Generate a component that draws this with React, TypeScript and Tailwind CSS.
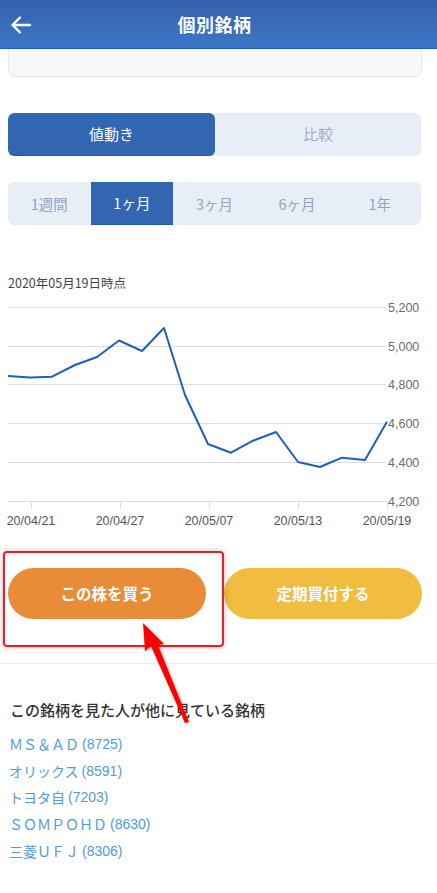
import React from "react";

const pts: [number, number][] = [
  [8, 376], [30, 377.5], [52, 376.7], [75, 365], [97, 357], [119, 340.5], [142, 351], [164, 328],
  [185, 395], [208, 444], [231, 452.7], [253, 440.7], [276, 432], [298, 462], [320, 467], [342, 457.7],
  [365, 460], [387, 421.7],
];
const TOP = 295;

function Chart() {
  const grid = [
    { y: 307, v: "5,200" },
    { y: 346, v: "5,000" },
    { y: 384, v: "4,800" },
    { y: 423, v: "4,600" },
    { y: 462, v: "4,400" },
    { y: 501, v: "4,200" },
  ];
  const ticks = [
    { x: 31, l: "20/04/21" },
    { x: 120, l: "20/04/27" },
    { x: 209, l: "20/05/07" },
    { x: 298, l: "20/05/13" },
    { x: 387, l: "20/05/19" },
  ];
  const d = pts.map((p, i) => `${i ? "L" : "M"}${p[0]} ${p[1] - TOP}`).join(" ");
  return (
    <svg width="437" height="235" className="block" style={{ fontFamily: "'Liberation Sans', 'Noto Sans CJK JP', sans-serif" }}>
      {grid.map((g) => (
        <g key={g.v}>
          <line x1="8" x2="386" y1={g.y - TOP + 0.5} y2={g.y - TOP + 0.5} stroke="#d9dee4" strokeWidth="1" />
          <text x="388" y={g.y - TOP + 4.5} fontSize="12.5" fill="#6b6b6b">{g.v}</text>
        </g>
      ))}
      {ticks.map((t) => (
        <g key={t.l}>
          <line x1={t.x + 0.5} x2={t.x + 0.5} y1={501 - TOP} y2={509 - TOP} stroke="#d9dee4" strokeWidth="1" />
          <text x={t.x} y={525 - TOP} fontSize="12.5" fill="#555" textAnchor="middle">{t.l}</text>
        </g>
      ))}
      <path d={d} fill="none" stroke="#1d5fbe" strokeWidth="2" strokeLinejoin="round" />
    </svg>
  );
}

export default function App() {
  const jp = { fontFamily: "'Noto Sans CJK JP', 'Liberation Sans', sans-serif" };
  const periods = ["1週間", "1ヶ月", "3ヶ月", "6ヶ月", "1年"];
  const links = [
    ["ＭＳ＆ＡＤ", "(8725)"],
    ["オリックス", "(8591)"],
    ["トヨタ自", "(7203)"],
    ["ＳＯＭＰＯＨＤ", "(8630)"],
    ["三菱ＵＦＪ", "(8306)"],
  ];
  return (
    <div className="relative w-[437px] h-[893px] overflow-hidden bg-white" style={jp}>
      {/* Header */}
      <div className="relative h-[49px] bg-gradient-to-b from-[#3462ac] to-[#3e76c8] border-b-[1.5px] border-[#1d5fc8] flex items-center justify-center pr-[8px]">
        <svg className="absolute left-[9px] top-[13px]" width="24" height="24" viewBox="0 0 24 24" fill="none" stroke="white" strokeWidth="2.4" strokeLinecap="round" strokeLinejoin="round">
          <path d="M21 12H3.5M11 4.5 3.5 12l7.5 7.5" />
        </svg>
        <span className="text-white text-[18px] font-bold tracking-[0.5px]">個別銘柄</span>
      </div>
      {/* Card remnant */}
      <div className="ml-[8px] w-[414px] h-[28px] bg-[#f7f8fa] border border-t-0 border-[#e6e8eb] rounded-b-[8px]" />

      {/* Tabs */}
      <div className="ml-[8px] w-[413px] mt-[36px] h-[43px] flex rounded-[6px] bg-[#e8eef6] overflow-hidden">
        <div className="w-[207px] bg-[#3265b2] flex items-center justify-center text-white text-[15px] rounded-[6px] border-b border-[#1d57b0]">値動き</div>
        <div className="flex-1 flex items-center justify-center text-[#9cb0cc] text-[15px]">比較</div>
      </div>

      {/* Period */}
      <div className="ml-[8px] w-[413px] mt-[26px] h-[43px] grid grid-cols-5 rounded-[6px] bg-[#e8eef6] overflow-hidden">
        {periods.map((p, i) => (
          <div
            key={p}
            className={
              i === 1
                ? "flex items-center justify-center bg-[#3265b2] text-white text-[14.5px] border-b border-[#1d57b0]"
                : "flex items-center justify-center text-[#8ea5c4] text-[14.5px]"
            }
          >
            {p}
          </div>
        ))}
      </div>

      <div className="mt-[49px] px-[8px] text-[12.5px] leading-[17px] text-[#444]">2020年05月19日時点</div>
      <div className="mt-[4px]">
        <Chart />
      </div>

      {/* Buttons */}
      <div className="mt-[38px] ml-[8px] w-[414px] flex justify-between">
        <div className="w-[198px] h-[51px] rounded-full bg-[#e98c37] flex items-center justify-center text-white font-bold text-[15.5px]">この株を買う</div>
        <div className="w-[198px] h-[51px] rounded-full bg-[#f0bd41] flex items-center justify-center text-white font-bold text-[15.5px]">定期買付する</div>
      </div>

      <div className="mt-[44px] h-px bg-[#ededed]" />

      <div className="mt-[36px] px-[10px] text-[15px] font-medium text-[#333] leading-[20px]">この銘柄を見た人が他に見ている銘柄</div>
      <div className="mt-[11px] px-[9px] flex flex-col">
        {links.map(([n, c]) => (
          <div key={c} className="h-[26.75px] flex items-center text-[14px] text-[#4d9be0]">
            <span>{n}</span>
            <span className="ml-[3px]" style={{ fontFamily: "'Liberation Sans', sans-serif" }}>{c}</span>
          </div>
        ))}
      </div>

      {/* Annotation overlay */}
      <div className="absolute left-[3px] top-[551px] w-[221px] h-[96px] border-2 border-[#ee1c24] rounded-[4px] shadow-[0_0_6px_rgba(0,0,0,0.25)]" />
      <svg className="absolute left-0 top-0 pointer-events-none" width="437" height="893">
        <defs>
          <filter id="sh" x="-20%" y="-20%" width="140%" height="140%">
            <feDropShadow dx="1" dy="1" stdDeviation="1.5" floodColor="#000" floodOpacity="0.3" />
          </filter>
        </defs>
        <polygon
          points="143,623 164,644 158,645 189,722 185,723 151,646 145,651"
          fill="#ff0000"
          filter="url(#sh)"
        />
      </svg>
    </div>
  );
}
